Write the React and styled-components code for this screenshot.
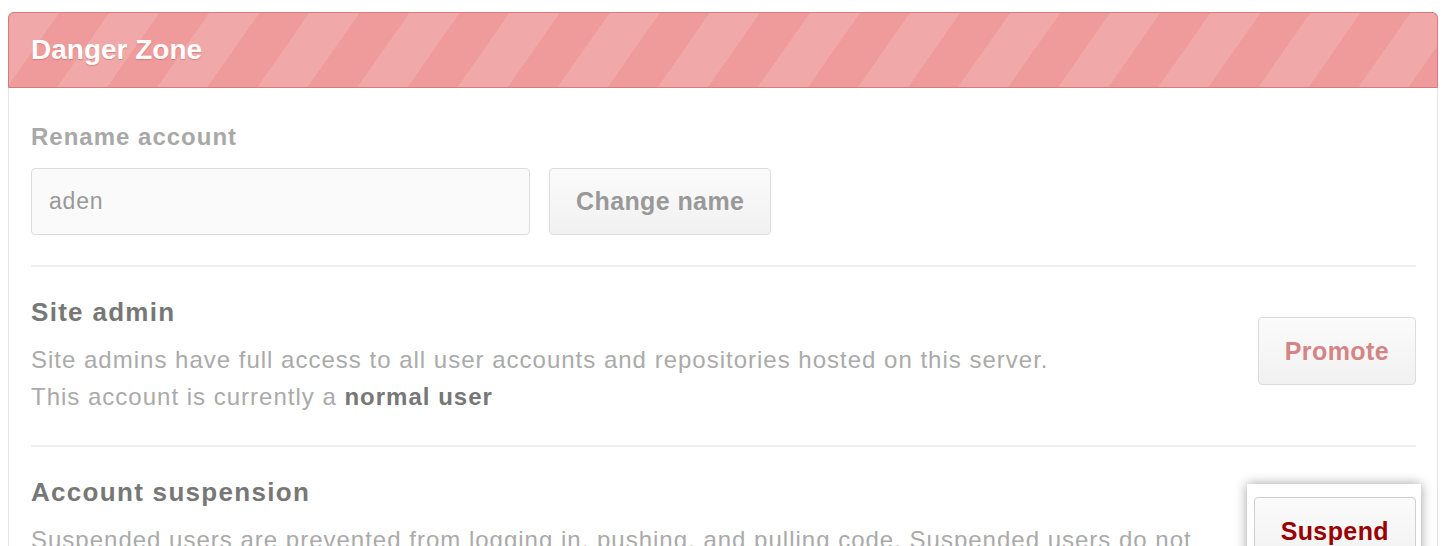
import React from 'react'
import styled, { createGlobalStyle } from 'styled-components'

const GlobalStyle = createGlobalStyle`
  html, body {
    margin: 0;
    padding: 0;
    background: #fff;
  }
  body {
    font-family: "Liberation Sans", Arial, sans-serif;
  }
`

const Page = styled.div`
  padding: 12px 10px 0 8px;
  height: 546px;
  box-sizing: border-box;
  overflow: hidden;
`

const Box = styled.div`
  border: 1px solid #e6e6e6;
  border-top: none;
  border-radius: 5px;
`

const BoxHeader = styled.div`
  height: 74px;
  margin: 0 -1px;
  padding: 0 22px;
  display: flex;
  align-items: center;
  border: 1px solid #d57b7b;
  border-radius: 6px 6px 0 0;
  background-color: #ef9b9b;
  background-image: repeating-linear-gradient(
    125deg,
    #f0a8a8 0px,
    #f0a8a8 41px,
    #ef9b9b 41px,
    #ef9b9b 82px
  );
  color: #fff;
  font-size: 28px;
  font-weight: bold;
  text-shadow: 0 1px 1px rgba(170, 60, 60, 0.35);
`

const BoxBody = styled.div`
  padding: 0 21px 0 22px;
`

const Row = styled.div`
  display: flex;
  align-items: flex-start;
  gap: 40px;
  padding: ${p => p.$top || 30}px 0 30px;
  border-bottom: ${p => (p.$last ? 'none' : '2px solid #eeeeee')};
`

const Info = styled.div`
  flex: 1;
  max-width: ${p => p.$max || 'none'};
`

const Heading = styled.h3`
  margin: 0;
  font-size: ${p => (p.$small ? 24 : 26)}px;
  line-height: ${p => (p.$small ? 28 : 30)}px;
  letter-spacing: ${p => (p.$small ? 1 : 1.3)}px;
  font-weight: bold;
  color: ${p => (p.$muted ? '#a8a8a8' : '#777777')};
`

const Description = styled.p`
  margin: 14px 0 0;
  font-size: 24px;
  line-height: 37px;
  letter-spacing: 1px;
  color: #aaaaaa;

  strong {
    color: #777777;
  }
`

const Form = styled.div`
  display: flex;
  gap: 19px;
  margin-top: 17px;
`

const TextInput = styled.input`
  width: 499px;
  height: 67px;
  box-sizing: border-box;
  padding: 0 17px;
  border: 1px solid #dddddd;
  border-radius: 4px;
  background: #fafafa;
  font-family: inherit;
  font-size: 23px;
  letter-spacing: 0.8px;
  color: #999999;
  outline: none;
`

const Button = styled.button`
  height: ${p => p.$h || 68}px;
  box-sizing: border-box;
  padding: 0 26px;
  border: 1px solid #dddddd;
  border-radius: 4px;
  background: linear-gradient(#fbfbfb, #f1f1f1);
  font-family: inherit;
  font-size: 25px;
  font-weight: bold;
  letter-spacing: 0.4px;
  color: ${p => p.$color || '#999999'};
  cursor: pointer;
  white-space: nowrap;
`

const Side = styled.div`
  margin-top: 20px;
  margin-left: auto;
  flex-shrink: 0;
`

const Highlight = styled.div`
  position: relative;
  isolation: isolate;

  &::before {
    content: '';
    position: absolute;
    top: -13px;
    left: -7px;
    right: -5px;
    bottom: -14px;
    background: #fff;
    box-shadow: 0 0 11px rgba(0, 0, 0, 0.38);
    z-index: -1;
  }
`

const DangerButton = styled(Button)`
  border-color: #cfcfcf;
`

export default function App() {
  return (
    <>
      <GlobalStyle />
      <Page>
        <Box>
          <BoxHeader>Danger Zone</BoxHeader>
          <BoxBody>
            <Row $top={35}>
              <Info>
                <Heading $small $muted>Rename account</Heading>
                <Form>
                  <TextInput defaultValue="aden" />
                  <Button $h={67}>Change name</Button>
                </Form>
              </Info>
            </Row>
            <Row>
              <Info>
                <Heading>Site admin</Heading>
                <Description>
                  Site admins have full access to all user accounts and repositories hosted on this server.
                  <br />
                  This account is currently a <strong>normal user</strong>
                </Description>
              </Info>
              <Side>
                <Button $color="#d38585">Promote</Button>
              </Side>
            </Row>
            <Row $last>
              <Info $max="1170px">
                <Heading>Account suspension</Heading>
                <Description>
                  Suspended users are prevented from logging in, pushing, and pulling code. Suspended users do not
                  have access to their repositories.
                </Description>
              </Info>
              <Side>
                <Highlight>
                  <DangerButton $color="#990000">Suspend</DangerButton>
                </Highlight>
              </Side>
            </Row>
          </BoxBody>
        </Box>
      </Page>
    </>
  )
}
